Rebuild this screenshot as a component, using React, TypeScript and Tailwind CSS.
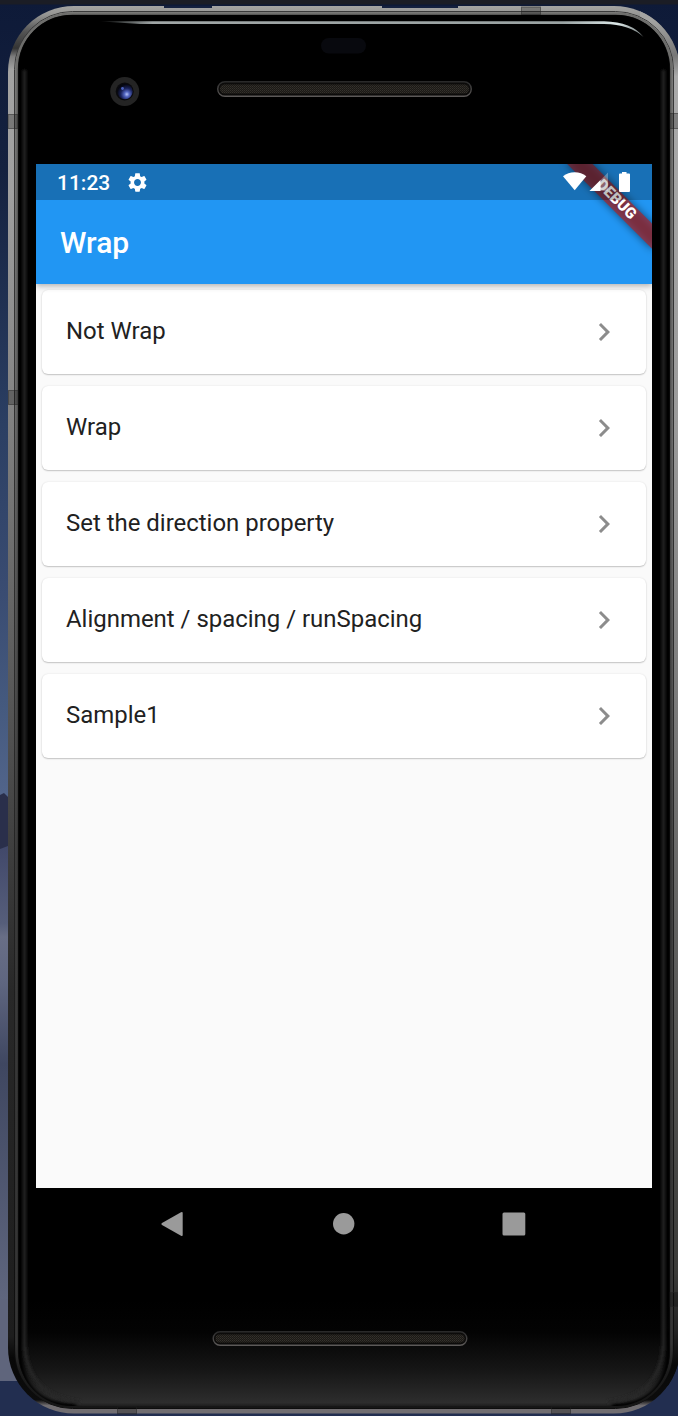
import React from "react";

const items = [
  "Not Wrap",
  "Wrap",
  "Set the direction property",
  "Alignment / spacing / runSpacing",
  "Sample1",
];

function Speaker({ x, y, h }: { x: number; y: number; h: number }) {
  return (
    <g>
      <rect x={x + 0.7} y={y + 0.7} width={253.6} height={h - 1.4} rx={(h - 1.4) / 2} fill="#0c0b0a" stroke="url(#rim)" strokeWidth={1.4} />
      <rect x={x + 3} y={y + 3.5} width={249} height={h - 7} rx={(h - 7) / 2} fill="url(#mesh)" />
    </g>
  );
}

function Device() {
  return (
    <svg className="absolute inset-0" width={678} height={1416} viewBox="0 0 678 1416">
      <defs>
        <linearGradient id="sky" x1="0" y1="0" x2="0" y2="1416" gradientUnits="userSpaceOnUse">
          <stop offset="0" stopColor="#0e1a38" />
          <stop offset="0.12" stopColor="#14213f" />
          <stop offset="0.3" stopColor="#2b3f63" />
          <stop offset="0.42" stopColor="#3a4c72" />
          <stop offset="0.5" stopColor="#455a7f" />
          <stop offset="0.56" stopColor="#51648a" />
        </linearGradient>
        <linearGradient id="dune" x1="0" y1="846" x2="0" y2="1300" gradientUnits="userSpaceOnUse">
          <stop offset="0" stopColor="#41486a" />
          <stop offset="0.17" stopColor="#565e7a" />
          <stop offset="0.2" stopColor="#686e86" />
          <stop offset="0.3" stopColor="#5f6680" />
          <stop offset="0.48" stopColor="#3f4761" />
          <stop offset="1" stopColor="#5f667e" />
        </linearGradient>
        <linearGradient id="metal" x1="0" y1="6" x2="0" y2="1414" gradientUnits="userSpaceOnUse">
          <stop offset="0" stopColor="#a4a4a2" />
          <stop offset="0.006" stopColor="#969694" />
          <stop offset="0.018" stopColor="#555" />
          <stop offset="0.03" stopColor="#343434" />
          <stop offset="0.036" stopColor="#7d7d7d" />
          <stop offset="0.045" stopColor="#a3a3a2" />
          <stop offset="0.13" stopColor="#a0a0a0" />
          <stop offset="0.3" stopColor="#808080" />
          <stop offset="0.45" stopColor="#606060" />
          <stop offset="0.6" stopColor="#3e3e3e" />
          <stop offset="0.7" stopColor="#282828" />
          <stop offset="0.945" stopColor="#1d1d1d" />
          <stop offset="0.96" stopColor="#080808" />
          <stop offset="0.99" stopColor="#0c0c0c" />
          <stop offset="0.994" stopColor="#716e71" />
          <stop offset="1" stopColor="#716e71" />
        </linearGradient>
        <linearGradient id="metalRight" x1="0" y1="6" x2="0" y2="1414" gradientUnits="userSpaceOnUse">
          <stop offset="0.01" stopColor="#a4a4a2" />
          <stop offset="0.035" stopColor="#777" />
          <stop offset="0.05" stopColor="#aaaaaa" />
          <stop offset="0.3" stopColor="#9a9a9a" />
          <stop offset="0.5" stopColor="#7a7a7a" />
          <stop offset="0.7" stopColor="#5a5a59" />
          <stop offset="0.9" stopColor="#3a3a38" />
          <stop offset="0.94" stopColor="#232323" />
          <stop offset="0.965" stopColor="#080808" />
          <stop offset="0.99" stopColor="#0c0c0c" />
        </linearGradient>
        <linearGradient id="edge" x1="0" y1="6" x2="0" y2="1414" gradientUnits="userSpaceOnUse">
          <stop offset="0" stopColor="#6e6e6c" />
          <stop offset="0.3" stopColor="#606060" />
          <stop offset="0.6" stopColor="#3a3a3a" />
          <stop offset="0.95" stopColor="#343434" />
          <stop offset="0.97" stopColor="#1b1b1b" />
          <stop offset="1" stopColor="#151515" />
        </linearGradient>
        <linearGradient id="groove" x1="0" y1="6" x2="0" y2="1414" gradientUnits="userSpaceOnUse">
          <stop offset="0" stopColor="#3a3a3a" />
          <stop offset="0.5" stopColor="#2b2b2b" />
          <stop offset="1" stopColor="#0a0a0a" />
        </linearGradient>
        <linearGradient id="chin" x1="0" y1="1300" x2="0" y2="1408" gradientUnits="userSpaceOnUse">
          <stop offset="0" stopColor="#000" />
          <stop offset="0.3" stopColor="#030303" />
          <stop offset="0.65" stopColor="#161616" />
          <stop offset="0.95" stopColor="#2d2d2d" />
          <stop offset="1" stopColor="#151515" />
        </linearGradient>
        <linearGradient id="shine" x1="98" y1="0" x2="645" y2="0" gradientUnits="userSpaceOnUse">
          <stop offset="0" stopColor="#9aa3a3" stopOpacity="0" />
          <stop offset="0.1" stopColor="#a0a6a6" />
          <stop offset="0.85" stopColor="#9aa3a3" />
          <stop offset="0.95" stopColor="#dce8e8" />
          <stop offset="1" stopColor="#6f7676" />
        </linearGradient>
        <linearGradient id="rim" x1="0" y1="0" x2="0" y2="1">
          <stop offset="0" stopColor="#2a2a2a" />
          <stop offset="1" stopColor="#5c5958" />
        </linearGradient>
        <radialGradient id="lens" cx="0.62" cy="0.68" r="0.65">
          <stop offset="0" stopColor="#b4c2f8" />
          <stop offset="0.25" stopColor="#5366c0" />
          <stop offset="0.6" stopColor="#1a2259" />
          <stop offset="1" stopColor="#05060f" />
        </radialGradient>
        <pattern id="mesh" width="2" height="2" patternUnits="userSpaceOnUse">
          <rect width="2" height="2" fill="#1b1916" />
          <rect width="1" height="1" fill="#35322c" />
          <rect x="1" y="1" width="1" height="1" fill="#2c2924" />
        </pattern>
        <filter id="soft" x="-20%" y="-20%" width="140%" height="140%">
          <feGaussianBlur stdDeviation="1.6" />
        </filter>
        <clipPath id="body">
          <rect x="19" y="15" width="650" height="1391" rx="52" />
        </clipPath>
        <clipPath id="rightHalf">
          <rect x="640" y="6" width="38" height="1380" />
        </clipPath>
      </defs>

      <rect width="678" height="1416" fill="url(#sky)" />
      <rect width="678" height="4.5" fill="#1b1d25" />
      <path d="M0 795 L4 793 L8 797 V860 H0Z" fill="#2a2f4b" />
      <path d="M0 849 L8 846 V1300 H0Z" fill="url(#dune)" />
      <path d="M0 1300 L20 1298 V1382 H0Z" fill="#5f657c" />
      <path d="M0 1381 H60 L678 1340 V1416 H0Z" fill="#222e50" />

      <rect x="8" y="6" width="672" height="1407.5" rx="66" fill="url(#metal)" />
      <rect x="8" y="6" width="672" height="1407.5" rx="66" fill="url(#metalRight)" clipPath="url(#rightHalf)" />
      <rect x="164" y="6" width="48" height="2" fill="#14203e" />
      <rect x="382" y="6" width="76" height="2" fill="#14203e" />
      <rect x="14.5" y="11.5" width="659" height="1397" rx="58" fill="none" stroke="url(#groove)" strokeWidth="1" />
      <rect x="16.5" y="13.5" width="655" height="1393.5" rx="56" fill="#111" stroke="url(#edge)" strokeWidth="2.6" />

      <g fill="#000" fillOpacity="0.25" stroke="#222" strokeOpacity="0.5">
        <rect x="8" y="114.5" width="10" height="14" />
        <rect x="8.5" y="390.5" width="10" height="14" />
        <rect x="669.5" y="113.5" width="12" height="15" />
        <rect x="521.5" y="7" width="19" height="8" />
        <rect x="669.5" y="1292.5" width="12" height="14" />
        <rect x="117.5" y="1407" width="19" height="7" />
        <rect x="551.5" y="1407" width="19" height="7" />
      </g>

      <rect x="18.5" y="15" width="651" height="1391" rx="53" fill="#000" />
      <g clipPath="url(#body)">
        <rect x="18" y="1300" width="652" height="108" fill="url(#chin)" />
        <path d="M19 1330 V1350 Q20 1406 76 1406" fill="none" stroke="#000" strokeWidth="5" filter="url(#soft)" />
        <path d="M669 1330 V1350 Q668 1406 612 1406" fill="none" stroke="#000" strokeWidth="5" filter="url(#soft)" />
        <path d="M24.5 70 V1342 Q26 1396 80 1402 M608 1402 Q662 1396 663.5 1342 V70" fill="none" stroke="#262626" strokeWidth="3.5" filter="url(#soft)" />
      </g>
      <path d="M98 21.3 H604 Q632 22 643.5 37 Q630 24.5 604 24 H140Z" fill="url(#shine)" />

      <rect x="321" y="38" width="45" height="15.5" rx="7.7" fill="#08090e" />
      <circle cx="124.7" cy="91.5" r="14.5" fill="#242424" />
      <circle cx="124.7" cy="91.5" r="9" fill="#0a0a0d" />
      <circle cx="125" cy="91.5" r="7.7" fill="url(#lens)" />
      <circle cx="122.5" cy="88.5" r="1.4" fill="#4c61bd" />
      <Speaker x={217} y={81} h={16} />
      <Speaker x={212.5} y={1331} h={15} />
    </svg>
  );
}

function StatusBar() {
  return (
    <div className="absolute inset-x-0 top-0 z-30 flex h-9 items-center bg-black/25 pl-[21px] pr-[14px] text-white">
      <span className="w-[69px] pt-[3px] text-[21px] font-medium leading-none">11:23</span>
      <svg width="23" height="23" viewBox="0 0 24 24" fill="currentColor">
        <path d="M19.14 12.94c.04-.3.06-.61.06-.94 0-.32-.02-.64-.07-.94l2.03-1.58c.18-.14.23-.41.12-.61l-1.92-3.32c-.12-.22-.37-.29-.59-.22l-2.39.96c-.5-.38-1.03-.7-1.62-.94l-.36-2.54c-.04-.24-.24-.41-.48-.41h-3.84c-.24 0-.43.17-.47.41l-.36 2.54c-.59.24-1.13.57-1.62.94l-2.39-.96c-.22-.08-.47 0-.59.22L2.74 8.87c-.12.21-.08.47.12.61l2.03 1.58c-.05.3-.09.63-.09.94s.02.64.07.94l-2.03 1.58c-.18.14-.23.41-.12.61l1.92 3.32c.12.22.37.29.59.22l2.39-.96c.5.38 1.03.7 1.62.94l.36 2.54c.05.24.24.41.48.41h3.84c.24 0 .44-.17.47-.41l.36-2.54c.59-.24 1.13-.56 1.62-.94l2.39.96c.22.08.47 0 .59-.22l1.92-3.32c.12-.22.07-.47-.12-.61l-2.01-1.58zM12 15.6c-1.98 0-3.6-1.62-3.6-3.6s1.62-3.6 3.6-3.6 3.6 1.62 3.6 3.6-1.62 3.6-3.6 3.6z" />
      </svg>
      <svg className="ml-auto" width="76" height="36" viewBox="0 0 76 36" fill="currentColor">
        <path d="M12.7 26.300 L1 12.200 Q6 8.300 12.700 8.300 T24.300 12.200Z" />
        <path d="M27.500 27 L46 8.500 V27Z" opacity="0.3" />
        <path d="M27.500 27 L38.500 16 V27Z" />
        <path d="M60 8h4.500v1.500H67q1 0 1 1V27q0 1-1 1H58q-1 0-1-1V10.500q0-1 1-1h2Z" />
      </svg>
    </div>
  );
}

function DebugBanner() {
  return (
    <div className="absolute left-[616px] top-0 z-20 h-0 w-0 rotate-45">
      <div className="absolute -left-[60px] top-[42px] h-[18px] w-[120px] bg-black/50 blur-[4px]" />
      <div className="absolute -left-[60px] top-[42px] flex h-[18px] w-[120px] items-center justify-center bg-[#b71c1c]/[0.63] text-[15.3px] font-black leading-none text-white">
        DEBUG
      </div>
    </div>
  );
}

export default function App() {
  return (
    <div className="relative h-[1416px] w-[678px] overflow-hidden bg-black pl-9 pt-[164px] font-[Roboto,sans-serif]">
      <Device />
      <main className="relative flex h-[1024px] w-[616px] flex-col overflow-hidden bg-[#fafafa]">
        <StatusBar />
        <DebugBanner />
        <header className="z-10 flex h-[120px] shrink-0 items-center bg-[#2196f3] pl-6 pt-9 text-[30px] font-medium text-white shadow-[0_2px_6px_rgba(0,0,0,0.3)]">
          <h1>Wrap</h1>
        </header>
        <ul className="flex flex-col gap-3 p-1.5">
          {items.map((label) => (
            <li
              key={label}
              className="flex h-[84px] items-center justify-between rounded-md bg-white px-6 text-[23.95px] text-[#212121] shadow-[0_1px_1.5px_rgba(0,0,0,0.2),0_0_2px_rgba(0,0,0,0.1)]"
            >
              <span className="pb-px">{label}</span>
              <svg width="36" height="36" viewBox="0 0 24 24" fill="#8c8c8c">
                <path d="M10 6 8.59 7.41 13.17 12l-4.58 4.59L10 18l6-6z" />
              </svg>
            </li>
          ))}
        </ul>
      </main>
      <nav className="relative h-[72px] w-[616px]">
        <svg width="616" height="72" viewBox="0 0 616 72" fill="#9a9a9a">
          <path d="M126 35 L145 24.2 Q146.7 23.5 146.7 25 V47 Q146.7 48.5 145 47.8 L126 37 Q124.5 36 126 35Z" />
          <circle cx="307.7" cy="35.7" r="10.7" />
          <rect x="466.5" y="24.5" width="22.8" height="23" rx="1.5" />
        </svg>
      </nav>
    </div>
  );
}
